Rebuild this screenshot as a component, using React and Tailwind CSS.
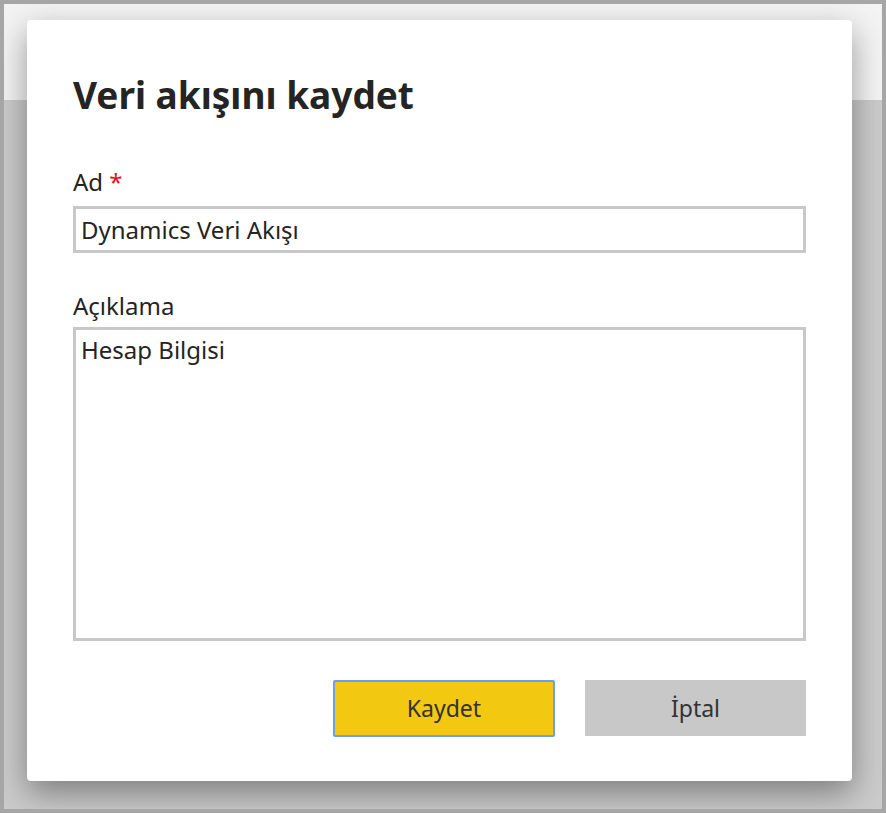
const SaveDataflowDialog = () => {
  return (
    <div className="relative w-[886px] h-[813px] border-4 border-[#a6a6a6] bg-[#cbcbcb] overflow-hidden" style={{ fontFamily: '"Noto Sans", "Open Sans", sans-serif' }}>
      <div className="h-[96px] bg-[#f3f3f3]"></div>
      <div className="absolute left-[23px] top-[16px] w-[825px] h-[761px] bg-white rounded-[4px] shadow-[0_12px_32px_rgba(0,0,0,0.38)] px-[46px] pt-[53px] flex flex-col">
        <h1 className="text-[37px] leading-[44px] font-bold text-[#252423]">Veri akışını kaydet</h1>
        <label className="mt-[50px] text-[24px] leading-[30px] text-[#252423]">
          Ad <span className="text-[#e81123]">*</span>
        </label>
        <input
          className="mt-[9px] h-[47px] border-[3px] border-[#c8c8c8] px-[5px] text-[24px] text-[#252423] outline-none"
          defaultValue="Dynamics Veri Akışı"
        />
        <label className="mt-[38px] text-[24px] leading-[30px] text-[#252423]">Açıklama</label>
        <textarea
          className="mt-[6px] h-[314px] border-[3px] border-[#c8c8c8] px-[5px] py-[5px] text-[24px] leading-[30px] text-[#252423] outline-none resize-none"
          defaultValue="Hesap Bilgisi"
        />
        <div className="mt-[39px] flex justify-end gap-[30px]">
          <button className="w-[222px] h-[57px] bg-[#f2c811] border-2 border-[#6b9fe8] rounded-[2px] text-[23px] text-[#333]">Kaydet</button>
          <button className="w-[221px] h-[56px] bg-[#c8c8c8] text-[23px] text-[#333]">İptal</button>
        </div>
      </div>
    </div>
  );
};

export default function App() {
  return <SaveDataflowDialog />;
}
